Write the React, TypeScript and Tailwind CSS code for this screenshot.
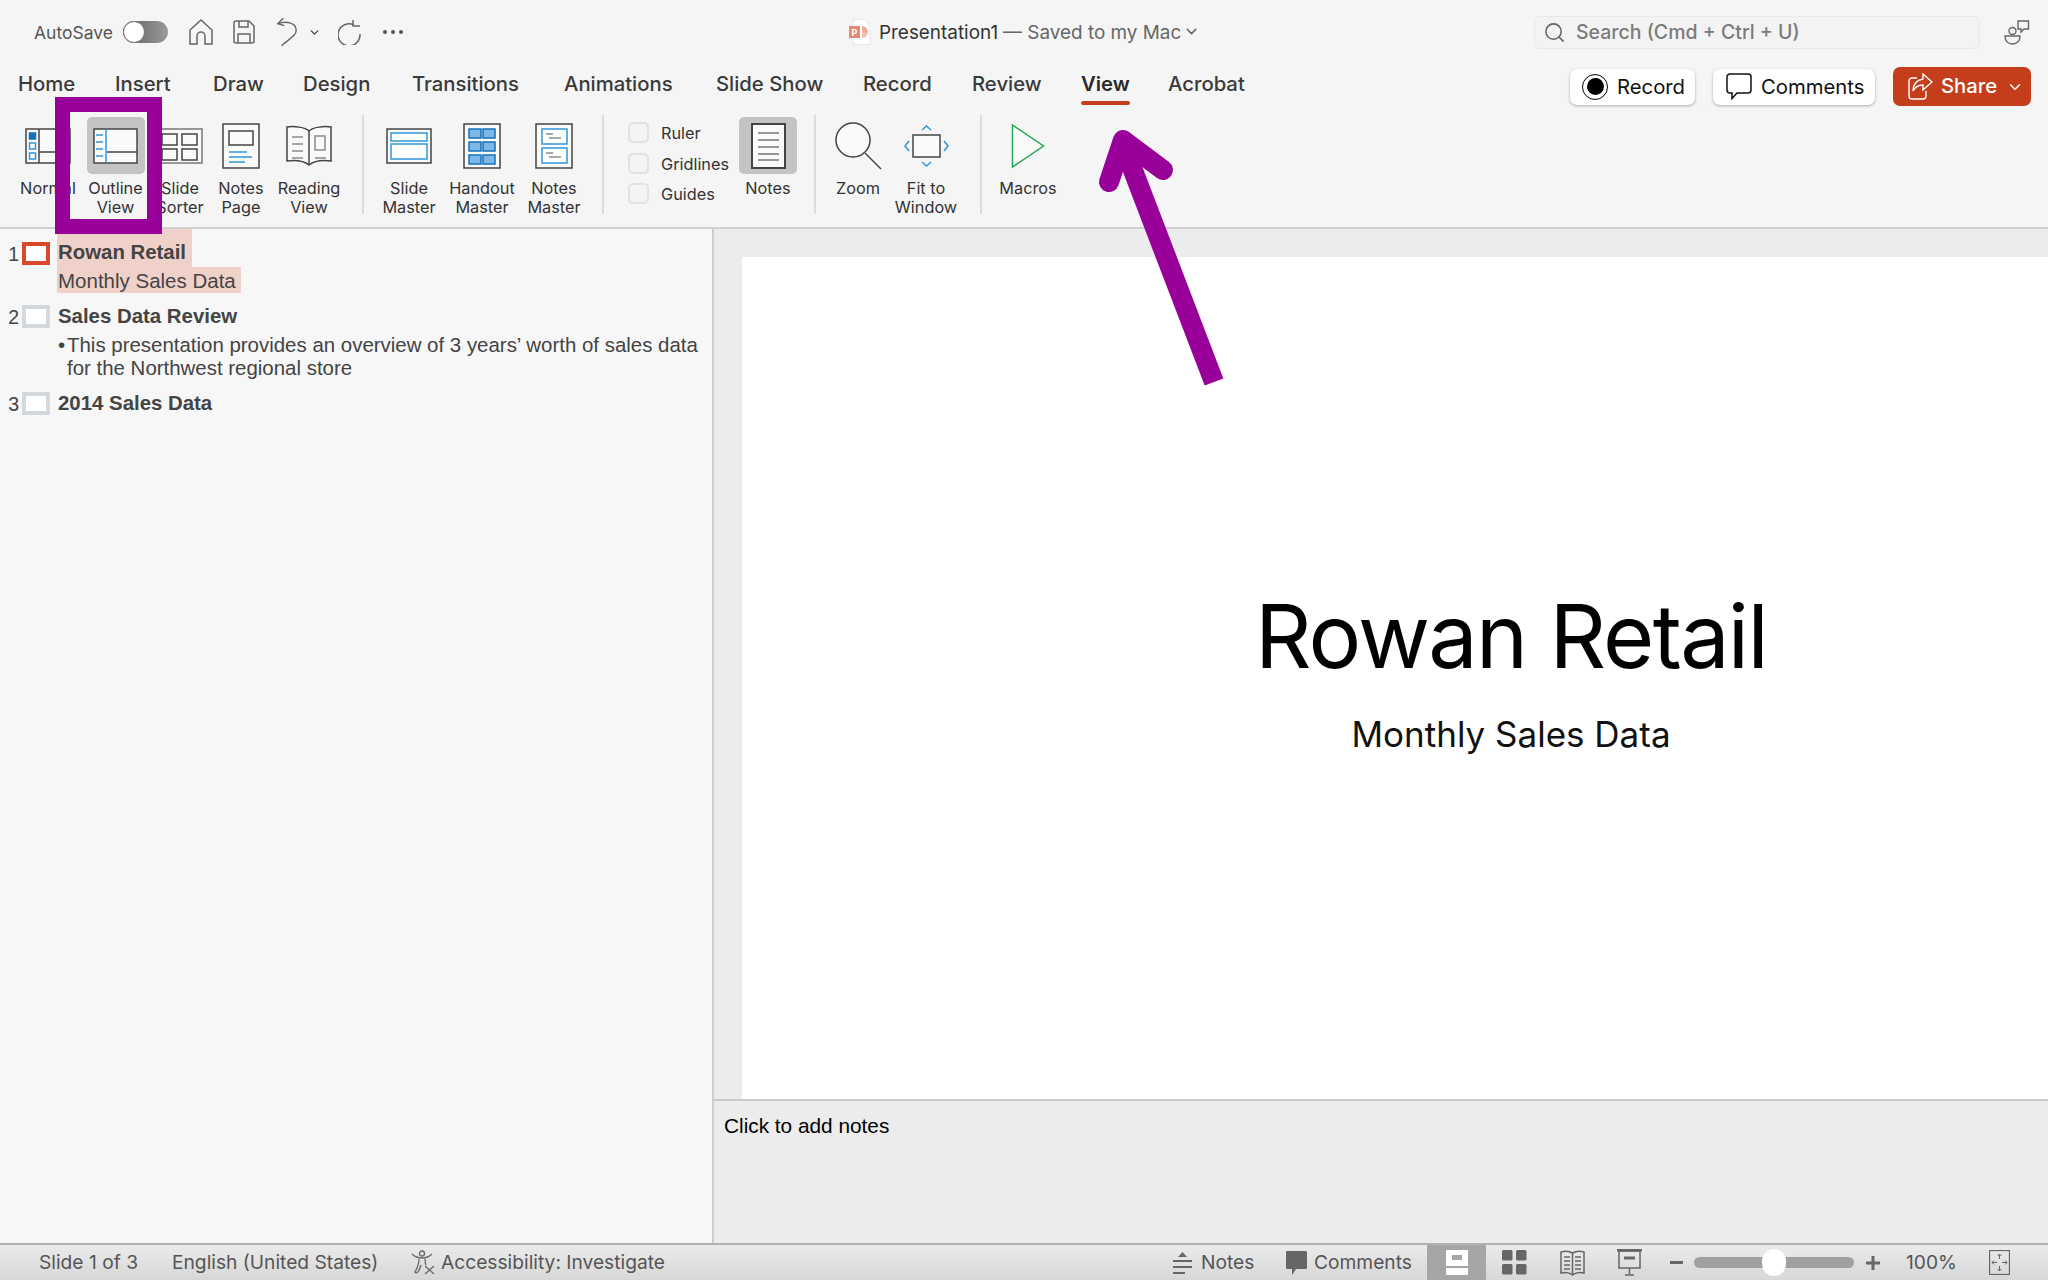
import { ChevronDown, Search } from "lucide-react";
import type { ReactNode } from "react";

const tabs = [
  { label: "Home", w: "w-[97px]" },
  { label: "Insert", w: "w-[98px]" },
  { label: "Draw", w: "w-[90px]" },
  { label: "Design", w: "w-[109px]" },
  { label: "Transitions", w: "w-[152px]" },
  { label: "Animations", w: "w-[152px]" },
  { label: "Slide Show", w: "w-[147px]" },
  { label: "Record", w: "w-[109px]" },
  { label: "Review", w: "w-[109px]" },
  { label: "View", w: "w-[87px]", active: true },
  { label: "Acrobat", w: "w-[90px]" },
];

const DARK = "#444";
const BLUE = "#2f96dc";

function Divider({ className = "" }: { className?: string }) {
  return <div className={`mt-[-2px] h-[99px] w-[2px] bg-[#dcdcdc] ${className}`} />;
}

function RibbonItem({
  width,
  label,
  selected,
  children,
}: {
  width: string;
  label: ReactNode;
  selected?: boolean;
  children: ReactNode;
}) {
  return (
    <div className={`flex shrink-0 flex-col items-center ${width}`}>
      <div
        className={`flex h-[57px] w-[58px] items-center justify-center rounded-[5px] ${
          selected ? "bg-[#c4c4c4]" : ""
        }`}
      >
        {children}
      </div>
      <div className="mt-[5px] whitespace-nowrap text-center text-[16.300px] leading-[19px] text-[#333]">
        {label}
      </div>
    </div>
  );
}

function NormalIcon() {
  return (
    <svg width="46" height="36" viewBox="0 0 46 36" className="shrink-0">
      <rect x="1" y="1" width="44" height="34" fill="#fafafa" stroke={DARK} strokeWidth="1.5" />
      <path d="M14 1v34M14 24h31" stroke={DARK} strokeWidth="1.5" />
      <rect x="4.500" y="5" width="6" height="6" fill="#1470b8" stroke="#1470b8" strokeWidth="1.5" />
      <rect x="4.500" y="15" width="6" height="6" fill="#fff" stroke={BLUE} strokeWidth="1.5" />
      <rect x="4.500" y="25" width="6" height="6" fill="#fff" stroke={BLUE} strokeWidth="1.5" />
    </svg>
  );
}

function OutlineIcon() {
  return (
    <svg width="45" height="36" viewBox="0 0 45 36" className="shrink-0">
      <rect x="1" y="1" width="43" height="34" fill="#fafafa" stroke={DARK} strokeWidth="1.5" />
      <path d="M14 24h30" stroke={DARK} strokeWidth="1.5" />
      <path d="M13 1v34" stroke={BLUE} strokeWidth="1.5" />
      <path d="M3 7h7M3 14h7M3 21h7M3 28h7" stroke={BLUE} strokeWidth="1.5" />
    </svg>
  );
}

function SorterIcon() {
  return (
    <svg width="46" height="36" viewBox="0 0 46 36" className="shrink-0">
      <rect x="1" y="1" width="44" height="34" fill="#fafafa" stroke="#777" strokeWidth="1.5" />
      <rect x="5" y="6" width="15" height="11" fill="none" stroke={DARK} strokeWidth="1.5" />
      <rect x="25" y="6" width="15" height="11" fill="none" stroke={DARK} strokeWidth="1.5" />
      <rect x="5" y="21" width="15" height="11" fill="none" stroke={DARK} strokeWidth="1.5" />
      <rect x="25" y="21" width="15" height="11" fill="none" stroke={DARK} strokeWidth="1.5" />
    </svg>
  );
}

function NotesPageIcon() {
  return (
    <svg width="38" height="46" viewBox="0 0 38 46">
      <rect x="1" y="1" width="36" height="44" fill="#fafafa" stroke={DARK} strokeWidth="1.5" />
      <rect x="7" y="8" width="24" height="14" fill="none" stroke={DARK} strokeWidth="1.5" />
      <path d="M7 29h18M7 34h23M7 39h16" stroke={BLUE} strokeWidth="1.5" />
    </svg>
  );
}

function ReadingIcon() {
  return (
    <svg width="46" height="42" viewBox="0 0 46 42">
      <path d="M23 6C19 2 8 1 1 2v34c8-1 17 0 22 4 5-4 14-5 22-4V2C38 1 27 2 23 6z" fill="#fafafa" stroke={DARK} strokeWidth="1.5" />
      <path d="M23 6v34" stroke={DARK} strokeWidth="1.5" />
      <path d="M6 12h11M6 19h11M6 26h11M6 33h11" stroke="#8a8a8a" strokeWidth="1.5" />
      <rect x="29" y="11" width="10" height="14" fill="none" stroke="#8a8a8a" strokeWidth="1.5" />
      <path d="M29 33h11" stroke="#8a8a8a" strokeWidth="1.5" />
    </svg>
  );
}

function SlideMasterIcon() {
  return (
    <svg width="46" height="36" viewBox="0 0 46 36">
      <rect x="1" y="1" width="44" height="34" fill="#fafafa" stroke={DARK} strokeWidth="1.5" />
      <rect x="5" y="5" width="36" height="8" fill="#fff" stroke={BLUE} strokeWidth="1.5" />
      <rect x="5" y="16" width="36" height="15" fill="#fff" stroke={BLUE} strokeWidth="1.5" />
    </svg>
  );
}

function HandoutIcon() {
  const cells = [6, 20];
  const rows = [6, 19, 32];
  return (
    <svg width="38" height="46" viewBox="0 0 38 46">
      <rect x="1" y="1" width="36" height="44" fill="#fafafa" stroke={DARK} strokeWidth="1.5" />
      {rows.map((y) =>
        cells.map((x) => (
          <rect key={`${x}-${y}`} x={x} y={y} width="12" height="9" fill="#7db8e8" stroke="#1470b8" strokeWidth="1.5" />
        )),
      )}
    </svg>
  );
}

function NotesMasterIcon() {
  return (
    <svg width="38" height="46" viewBox="0 0 38 46">
      <rect x="1" y="1" width="36" height="44" fill="#fafafa" stroke={DARK} strokeWidth="1.5" />
      <rect x="7" y="6" width="25" height="15" fill="#fff" stroke={BLUE} strokeWidth="1.5" />
      <rect x="7" y="25" width="25" height="15" fill="#fff" stroke={BLUE} strokeWidth="1.5" />
      <path d="M11 11h7M14 15h12M11 30h7M14 34h12" stroke="#555" strokeWidth="1.2" />
    </svg>
  );
}

function NotesIcon() {
  return (
    <svg width="35" height="46" viewBox="0 0 35 46">
      <rect x="1" y="1" width="33" height="44" fill="#fafafa" stroke={DARK} strokeWidth="2" />
      <path d="M7 10h21M7 17h21M7 24h21M7 31h21M7 37h21" stroke="#777" strokeWidth="1.5" />
    </svg>
  );
}

function ZoomIcon() {
  return (
    <svg width="47" height="48" viewBox="0 0 47 48">
      <circle cx="18" cy="18" r="17" fill="#fafafa" stroke={DARK} strokeWidth="1.5" />
      <path d="M30 31l16 16" stroke={DARK} strokeWidth="1.5" />
    </svg>
  );
}

function FitIcon() {
  return (
    <svg width="45" height="42" viewBox="0 0 45 42">
      <rect x="9" y="10" width="27" height="22" fill="#fafafa" stroke={DARK} strokeWidth="1.5" />
      <path d="M18 5l4.500-4 4.500 4M18 37l4.500 4 4.500-4M5 16l-4 5 4 5M40 16l4 5-4 5" fill="none" stroke={BLUE} strokeWidth="1.5" />
    </svg>
  );
}

function MacrosIcon() {
  return (
    <svg width="34" height="46" viewBox="0 0 34 46">
      <path d="M1.500 2l31 21-31 21z" fill="#fafafa" stroke="#22a95a" strokeWidth="1.5" />
    </svg>
  );
}

function ViewCheck({ label }: { label: string }) {
  return (
    <div className="flex h-[21px] items-center gap-[12px]">
      <div className="h-[21px] w-[21px] rounded-[5px] border-2 border-[#e2e2e2] bg-[#f4f4f4]" />
      <span className="pt-[2px] text-[16.300px] text-[#333]">{label}</span>
    </div>
  );
}

function TitleBar() {
  return (
    <div className="flex h-[64px] items-center">
      <div className="flex w-[849px] shrink-0 items-center pl-[34px]">
        <span className="w-[89px] pt-[2px] text-[17.500px] text-[#555]">AutoSave</span>
        <div className="flex h-[22px] w-[45px] items-center rounded-full bg-linear-to-r from-[#5f5f5f] to-[#9a9a9a]">
          <div className="h-[22px] w-[22px] rounded-full border border-[#777] bg-white" />
        </div>
        <svg width="24" height="26" viewBox="0 0 24 26" className="ml-[21px]" fill="none" stroke="#666" strokeWidth="1.5">
          <path d="M1 11L12 1l11 10v14h-7v-8a4 4 0 0 0-8 0v8H1z" />
        </svg>
        <svg width="22" height="24" viewBox="0 0 22 24" className="ml-[20px]" fill="none" stroke="#666" strokeWidth="1.5">
          <path d="M1 3a2 2 0 0 1 2-2h13l5 5v15a2 2 0 0 1-2 2H3a2 2 0 0 1-2-2z" />
          <path d="M6 1v6h9V1M5 23v-9h12v9" />
        </svg>
        <svg width="22" height="32" viewBox="0 0 24 32" className="ml-[21px]" fill="none" stroke="#666" strokeWidth="1.5">
          <path d="M8 1L2 7l7 2" />
          <path d="M2 7c8-3 20-2 20 7 0 6-7 9-16 17" />
        </svg>
        <ChevronDown size={13} strokeWidth={2.5} className="ml-[10px] text-[#444]" />
        <svg width="24" height="26" viewBox="0 0 24 26" className="ml-[17px]" fill="none" stroke="#666" strokeWidth="1.5">
          <path d="M16 6a11 11 0 1 0 6 9" />
          <path d="M15 1v6h7" />
        </svg>
        <div className="ml-[21px] flex gap-[4px]">
          <div className="h-[4px] w-[4px] rounded-full bg-[#555]" />
          <div className="h-[4px] w-[4px] rounded-full bg-[#555]" />
          <div className="h-[4px] w-[4px] rounded-full bg-[#555]" />
        </div>
      </div>
      <div className="flex w-[685px] shrink-0 items-center">
        <svg width="22" height="26" viewBox="0 0 22 26" className="mr-[8px]">
          <path d="M4 0.500h11l6 6v19H4z" fill="#fff" stroke="#e6e6e6" />
          <rect x="0" y="7" width="11" height="12" fill="#e38a72" />
          <path d="M13 7a6 6 0 0 1 6 6h-6z" fill="#eeaa98" />
          <path d="M13 13h6a6 6 0 0 1-6 6z" fill="#f3bcae" />
          <text x="2.500" y="16.500" fontSize="9" fontWeight="700" fill="#fff" fontFamily="Inter">P</text>
        </svg>
        <span className="pt-[2px] text-[18.900px] text-[#333]">Presentation1</span>
        <span className="ml-[5px] pt-[2px] text-[18.900px] text-[#666]">— Saved to my Mac</span>
        <ChevronDown size={17} className="ml-[2px] text-[#666]" />
      </div>
      <div className="flex h-[33px] w-[446px] shrink-0 items-center rounded-[6px] border border-[#e8e8e8] bg-[#f3f3f3] pl-[8px]">
        <Search size={23} strokeWidth={1.6} className="text-[#666]" />
        <span className="ml-[10px] pt-px text-[19.500px] font-medium text-[#7b7b7b]">Search (Cmd + Ctrl + U)</span>
      </div>
      <svg width="26" height="26" viewBox="0 0 26 26" className="ml-[24px]" fill="none" stroke="#666" strokeWidth="1.4">
        <circle cx="8.500" cy="12" r="3.500" />
        <path d="M1 17h15c0 5-3 8-7.500 8S1 22 1 17z" />
        <path d="M14 2h10.500v8H20l-3 3v-3h-3z" />
      </svg>
    </div>
  );
}

function TabRow() {
  return (
    <div className="flex h-[44px] items-start pl-[18px]">
      <div className="flex pt-[4px]">
        {tabs.map((t) => (
          <div key={t.label} className={`shrink-0 ${t.w}`}>
            <div className={`inline-flex flex-col items-stretch ${t.active ? "font-semibold text-[#2a2a2a]" : "font-medium text-[#3a3a3a]"}`}>
              <span className="whitespace-nowrap text-[20.300px] leading-[32px]">{t.label}</span>
              {t.active && <div className="mt-px h-[4px] rounded-full bg-[#c43e1c]" />}
            </div>
          </div>
        ))}
      </div>
      <div className="ml-auto mr-[17px] flex items-center gap-[18px] pt-[3px]">
        <button className="flex h-[36px] w-[125px] items-center rounded-[7px] bg-white pl-[12px] shadow-[0_1px_3px_rgba(0,0,0,0.3)]">
          <span className="flex h-[26px] w-[26px] items-center justify-center rounded-full border-[1.5px] border-black">
            <span className="h-[17px] w-[17px] rounded-full bg-black" />
          </span>
          <span className="ml-[9px] pt-px text-[20.300px] text-[#111]">Record</span>
        </button>
        <button className="flex h-[36px] w-[162px] items-center rounded-[7px] bg-white pl-[13px] shadow-[0_1px_3px_rgba(0,0,0,0.3)]">
          <svg width="26" height="27" viewBox="0 0 26 27" fill="none" stroke="#111" strokeWidth="1.5">
            <path d="M4 1h18a3 3 0 0 1 3 3v13a3 3 0 0 1-3 3H11l-5 5.500V20H4a3 3 0 0 1-3-3V4a3 3 0 0 1 3-3z" />
          </svg>
          <span className="ml-[9px] pt-px text-[20.300px] text-[#111]">Comments</span>
        </button>
        <button className="flex h-[39px] w-[138px] items-center rounded-[7px] bg-[#c43e1c] pl-[15px]">
          <svg width="25" height="27" viewBox="0 0 25 27" fill="none" stroke="#fff" strokeWidth="1.4">
            <path d="M9 5H4a3 3 0 0 0-3 3v15a3 3 0 0 0 3 3h11a3 3 0 0 0 3-3v-5" />
            <path d="M15 1l9 8-9 8v-5c-5 0-8 2-10 6 0-7 4-11 10-12z" />
          </svg>
          <span className="ml-[8px] text-[20.300px] font-medium text-white">Share</span>
          <ChevronDown size={18} className="ml-[9px] text-white" />
        </button>
      </div>
    </div>
  );
}

function Ribbon() {
  return (
    <div className="flex h-[119px] items-start pl-[15px] pt-[9px]">
      <RibbonItem width="w-[66px]" label="Normal"><NormalIcon /></RibbonItem>
      <RibbonItem width="w-[69px]" selected label={<>Outline<br />View</>}><OutlineIcon /></RibbonItem>
      <RibbonItem width="w-[60px]" label={<>Slide<br />Sorter</>}><SorterIcon /></RibbonItem>
      <RibbonItem width="w-[62px]" label={<>Notes<br />Page</>}><NotesPageIcon /></RibbonItem>
      <RibbonItem width="w-[74px]" label={<>Reading<br />View</>}><ReadingIcon /></RibbonItem>
      <Divider className="ml-[16px]" />
      <RibbonItem width="w-[72px] ml-[9px]" label={<>Slide<br />Master</>}><SlideMasterIcon /></RibbonItem>
      <RibbonItem width="w-[74px]" label={<>Handout<br />Master</>}><HandoutIcon /></RibbonItem>
      <RibbonItem width="w-[70px]" label={<>Notes<br />Master</>}><NotesMasterIcon /></RibbonItem>
      <Divider className="ml-[13px]" />
      <div className="ml-[24px] flex w-[111px] shrink-0 flex-col gap-[9.500px] pt-[5px]">
        <ViewCheck label="Ruler" />
        <ViewCheck label="Gridlines" />
        <ViewCheck label="Guides" />
      </div>
      <RibbonItem width="w-[58px]" selected label="Notes"><NotesIcon /></RibbonItem>
      <Divider className="ml-[17px]" />
      <RibbonItem width="w-[64px] ml-[10px]" label="Zoom"><ZoomIcon /></RibbonItem>
      <RibbonItem width="w-[72px]" label={<>Fit to<br />Window</>}><FitIcon /></RibbonItem>
      <Divider className="ml-[18px]" />
      <RibbonItem width="w-[72px] ml-[10px]" label="Macros"><MacrosIcon /></RibbonItem>
    </div>
  );
}

function Thumb({ active }: { active?: boolean }) {
  return (
    <div
      className={`h-[23px] w-[28px] shrink-0 border-[4px] bg-white ${
        active ? "border-[#d9482b]" : "border-[#d6d9dc]"
      }`}
    />
  );
}

function OutlinePane() {
  const num = "w-[22px] shrink-0 pr-[3px] pt-px text-right text-[19.500px] leading-[23px] text-[#444]";
  const title = "text-[20.400px] font-bold leading-[22px] text-[#444]";
  return (
    <div className="flex w-[714px] shrink-0 flex-col border-r-2 border-[#cfcfcf] bg-[#f7f7f7] font-['Liberation_Sans',sans-serif]">
      <div className="flex">
        <div className="mt-[13px] flex">
          <div className={num}>1</div>
          <Thumb active />
        </div>
        <div className="ml-[7px] flex flex-col items-start">
          <div className={`${title} h-[38px] bg-[#f0d1c9] pl-px pr-[6px] pt-[12px]`}>Rowan Retail</div>
          <div className="h-[26px] bg-[#f0d1c9] pl-px pr-[5px] pt-[2px] text-[20.500px] leading-[24px] text-[#444]">Monthly Sales Data</div>
        </div>
      </div>
      <div className="mt-[12px] flex">
        <div className="flex">
          <div className={num}>2</div>
          <Thumb />
        </div>
        <div className="ml-[8px] flex flex-col">
          <div className={title}>Sales Data Review</div>
          <div className="mt-[7px] flex text-[20.450px] leading-[22.500px] text-[#444]">
            <span className="w-[9px] shrink-0">•</span>
            <span className="w-[640px]">This presentation provides an overview of 3 years’ worth of sales data for the Northwest regional store</span>
          </div>
        </div>
      </div>
      <div className="mt-[13px] flex">
        <div className="flex">
          <div className={num}>3</div>
          <Thumb />
        </div>
        <div className={`${title} ml-[8px]`}>2014 Sales Data</div>
      </div>
    </div>
  );
}

function SlidePane() {
  return (
    <div className="flex min-w-0 flex-1 flex-col bg-[#ececec]">
      <div className="flex-1 overflow-hidden pl-[28px] pt-[28px]">
        <div className="flex h-[842px] w-[1538px] flex-col items-center bg-white pt-[329px]">
          <div className="text-[88px] leading-[100px] tracking-[-1.700px] text-black">Rowan Retail</div>
          <div className="mt-[26px] text-[35px] leading-[44px] text-[#111]">Monthly Sales Data</div>
        </div>
      </div>
      <div className="h-[144px] border-t-2 border-[#c9c9c9] pl-[10px] pt-[12px] font-['Liberation_Sans',sans-serif] text-[20.800px] leading-[26px] text-black">
        Click to add notes
      </div>
    </div>
  );
}

function StatusBar() {
  return (
    <div className="flex h-[37px] shrink-0 items-center border-t-2 border-[#b2b2b2] bg-linear-to-b from-[#ebebeb] to-[#d7d7d7] text-[19.200px] text-[#555]">
      <span className="ml-[39px] w-[133px]">Slide 1 of 3</span>
      <span className="w-[239px]">English (United States)</span>
      <svg width="25" height="25" viewBox="0 0 25 25" fill="none" stroke="#666" strokeWidth="1.3">
        <circle cx="11" cy="3.500" r="2.500" />
        <path d="M1 4c3 3 6 4 10 4s7-1 10-4M8 9c0 5-1 8-4 13 2 2 4 0 6-7M14 9c0 2 0 4 1 6" />
        <path d="M14 16l9 8M23 16l-9 8" />
      </svg>
      <span className="ml-[5px]">Accessibility: Investigate</span>
      <div className="ml-auto flex h-full items-center">
        <svg width="21" height="24" viewBox="0 0 21 24" fill="none" stroke="#666" strokeWidth="2">
          <path d="M6 6l4.500-5 4.500 5z" fill="#666" stroke="none" />
          <path d="M1 10h19M1 16h19M1 22h12" />
        </svg>
        <span className="ml-[8px] w-[85px]">Notes</span>
        <svg width="21" height="24" viewBox="0 0 21 24" fill="#666">
          <path d="M1 0h19a1 1 0 0 1 1 1v16a1 1 0 0 1-1 1H10l-4 6v-6H1a1 1 0 0 1-1-1V1a1 1 0 0 1 1-1z" />
        </svg>
        <span className="ml-[7px] w-[113px]">Comments</span>
        <div className="flex h-full w-[59px] items-center justify-center bg-[#a6a6a6]">
          <svg width="22" height="25" viewBox="0 0 22 25">
            <rect width="22" height="25" rx="1" fill="#fff" />
            <rect x="6" y="5" width="10" height="5" fill="#a6a6a6" />
            <rect x="0" y="16" width="22" height="2" fill="#a6a6a6" />
          </svg>
        </div>
        <svg width="25" height="25" viewBox="0 0 25 25" className="ml-[16px]" fill="#666">
          <rect width="10.500" height="10.500" rx="1.500" />
          <rect x="14" width="10.500" height="10.500" rx="1.500" />
          <rect y="14" width="10.500" height="10.500" rx="1.500" />
          <rect x="14" y="14" width="10.500" height="10.500" rx="1.500" />
        </svg>
        <svg width="25" height="26" viewBox="0 0 25 26" className="ml-[33px]" fill="none" stroke="#666" strokeWidth="1.5">
          <path d="M12.500 3C9 1 4 1 1 2v21c4-1 8-1 11.500 2 3.500-3 7.500-3 11.500-2V2c-3-1-8-1-11.500 1zM12.500 3v22" />
          <path d="M4 7h6M4 11h6M4 15h6M4 19h6M15 7h6M15 11h6M15 15h6M15 19h6" />
        </svg>
        <svg width="25" height="27" viewBox="0 0 25 27" className="ml-[32px]" fill="none" stroke="#666" strokeWidth="1.5">
          <path d="M0 1h25" strokeWidth="3" />
          <rect x="2" y="2" width="21" height="17" />
          <path d="M7 9h11" strokeWidth="3" />
          <path d="M12.500 19v6M8 26h9" />
        </svg>
        <div className="ml-[28px] h-[3px] w-[13px] bg-[#666]" />
        <div className="ml-[11px] flex h-[11px] w-[160px] items-center rounded-full bg-[#a0a0a0]">
          <div className="ml-[68px] h-[27px] w-[24px] rounded-full bg-white" />
        </div>
        <svg width="14" height="14" viewBox="0 0 14 14" className="ml-[12px]" stroke="#666" strokeWidth="3">
          <path d="M0 7h14M7 0v14" />
        </svg>
        <span className="ml-[26px] w-[83px]">100%</span>
        <svg width="21" height="25" viewBox="0 0 21 25" className="mr-[38px]" fill="none" stroke="#666" strokeWidth="1.3">
          <rect x="0.500" y="0.500" width="20" height="24" />
          <path d="M10.500 4v5M8.500 6l2-2 2 2M10.500 21v-5M8.500 19l2 2 2-2M3 12.500h5M5 10.500l-2 2 2 2M18 12.500h-5M16 10.500l2 2-2 2" strokeWidth="1" />
        </svg>
      </div>
    </div>
  );
}

export default function App() {
  return (
    <div className="relative flex h-[1280px] w-[2048px] flex-col overflow-hidden bg-[#f5f5f5] font-['Inter',sans-serif]">
      <header className="h-[229px] shrink-0 border-b-2 border-[#d0d0d0]">
        <TitleBar />
        <TabRow />
        <Ribbon />
      </header>
      <main className="flex min-h-0 flex-1">
        <OutlinePane />
        <SlidePane />
      </main>
      <StatusBar />

      {/* annotations drawn on top of the screenshot */}
      <div className="absolute left-[55px] top-[97px] h-[137px] w-[107px] border-[15px] border-[#990099]" />
      <svg className="absolute left-[1090px] top-[120px]" width="140" height="270" viewBox="0 0 140 270" fill="none" stroke="#990099">
        <path d="M124 262L36 32" strokeWidth="20" />
        <path d="M19 62L33 20L73 50" strokeWidth="20" strokeLinecap="round" strokeLinejoin="round" />
      </svg>
    </div>
  );
}
